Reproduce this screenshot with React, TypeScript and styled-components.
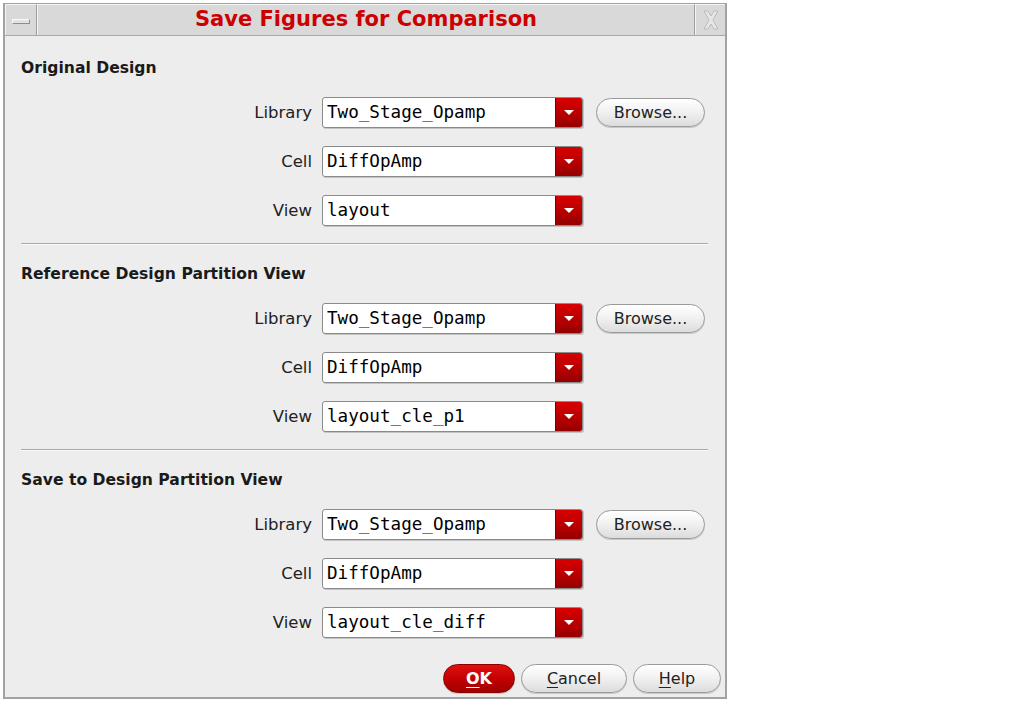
import React from "react";
import styled, { createGlobalStyle } from "styled-components";

const GlobalStyle = createGlobalStyle`
  body {
    margin: 0;
    background: #ffffff;
    font-family: "DejaVu Sans", sans-serif;
  }
`;

const sections = [
  { title: "Original Design", view: "layout" },
  { title: "Reference Design Partition View", view: "layout_cle_p1" },
  { title: "Save to Design Partition View", view: "layout_cle_diff" },
];

const Dialog: React.FC = () => {
  return (
    <Window>
      <TitleBar>
        <MinButton>
          <MinGlyph />
        </MinButton>
        <Title>Save Figures for Comparison</Title>
        <CloseButton>
          <svg width="18" height="22" viewBox="0 0 18 22">
            <path
              d="M2 2 L6 2 L9 7 L12 2 L16 2 L11 11 L16 20 L12 20 L9 15 L6 20 L2 20 L7 11 Z"
              fill="#e6e6e6"
              stroke="#bcbcbc"
              strokeWidth="1"
            />
          </svg>
        </CloseButton>
      </TitleBar>
      <Body>
        {sections.map((s, i) => (
          <React.Fragment key={s.title}>
            {i > 0 && <Separator />}
            <Section>
              <Heading>{s.title}</Heading>
              <Rows>
                <Row>
                  <Label>Library</Label>
                  <Combo value="Two_Stage_Opamp" />
                  <PillButton>Browse...</PillButton>
                </Row>
                <Row>
                  <Label>Cell</Label>
                  <Combo value="DiffOpAmp" />
                </Row>
                <Row>
                  <Label>View</Label>
                  <Combo value={s.view} />
                </Row>
              </Rows>
            </Section>
          </React.Fragment>
        ))}
        <Footer>
          <PillButton $primary $w={72}>
            <u>O</u>K
          </PillButton>
          <PillButton $w={106}>
            <u>C</u>ancel
          </PillButton>
          <PillButton $w={88}>
            <u>H</u>elp
          </PillButton>
        </Footer>
      </Body>
    </Window>
  );
};

const Combo: React.FC<{ value: string }> = ({ value }) => (
  <ComboBox>
    <ComboText>{value}</ComboText>
    <ComboArrow>
      <Triangle />
    </ComboArrow>
  </ComboBox>
);

const App: React.FC = () => (
  <>
    <GlobalStyle />
    <Dialog />
  </>
);

const Window = styled.div`
  margin: 3px 0 0 3px;
  width: 724px;
  height: 696px;
  box-sizing: border-box;
  border: 2px solid #a2a2a2;
  border-top-width: 1px;
  background: #ededed;
  display: flex;
  flex-direction: column;
`;

const TitleBar = styled.div`
  display: flex;
  height: 32px;
  box-sizing: border-box;
  background: #d9d9d9;
  border-bottom: 1px solid #a8a8a8;
`;

const MinButton = styled.div`
  width: 32px;
  box-sizing: border-box;
  border-right: 1px solid #9e9e9e;
  border-top: 1px solid #f4f4f4;
  border-left: 1px solid #f4f4f4;
  display: flex;
  align-items: center;
  justify-content: center;
`;

const MinGlyph = styled.div`
  width: 18px;
  height: 5px;
  box-sizing: border-box;
  border: 1px solid #8e8e8e;
  border-top-color: #fafafa;
  border-left-color: #fafafa;
  background: #e2e2e2;
  margin-top: 2px;
`;

const Title = styled.div`
  flex: 1;
  text-align: center;
  font-weight: bold;
  font-size: 21px;
  line-height: 29px;
  color: #cc0000;
  border-top: 1px solid #f4f4f4;
  border-left: 1px solid #f4f4f4;
  border-right: 1px solid #9e9e9e;
`;

const CloseButton = styled.div`
  width: 30px;
  box-sizing: border-box;
  border-top: 1px solid #f4f4f4;
  border-left: 1px solid #f4f4f4;
  display: flex;
  align-items: center;
  justify-content: center;
`;

const Body = styled.div`
  flex: 1;
  display: flex;
  flex-direction: column;
  padding-top: 22px;
`;

const Section = styled.section`
  padding: 0 17px 0 16px;
`;

const Heading = styled.h2`
  margin: 0;
  font-size: 15.6px;
  font-weight: bold;
  line-height: 20px;
  color: #1a1a1a;
`;

const Rows = styled.div`
  display: flex;
  flex-direction: column;
  gap: 18px;
  margin-top: 19px;
`;

const Row = styled.div`
  display: flex;
  align-items: center;
  height: 31px;
`;

const Label = styled.label`
  width: 291px;
  margin-right: 10px;
  text-align: right;
  font-size: 16.5px;
  color: #222;
`;

const ComboBox = styled.div`
  display: flex;
  width: 261px;
  height: 31px;
  box-sizing: border-box;
  border: 1px solid #8a8a8a;
  border-radius: 3px;
  background: #ffffff;
  overflow: hidden;
  box-shadow: 1px 1px 0 #c4c4c4;
  margin-right: 13px;
`;

const ComboText = styled.div`
  flex: 1;
  padding-left: 4px;
  font-family: "DejaVu Sans Mono", monospace;
  font-size: 17.6px;
  line-height: 29px;
  color: #000;
`;

const ComboArrow = styled.div`
  width: 26px;
  border-left: 1px solid #7a0000;
  background: linear-gradient(#d80000, #b40000 60%, #940000);
  display: flex;
  align-items: center;
  justify-content: center;
`;

const Triangle = styled.div`
  width: 0;
  height: 0;
  border-left: 5px solid transparent;
  border-right: 5px solid transparent;
  border-top: 5px solid #ffffff;
`;

const PillButton = styled.button<{ $primary?: boolean; $w?: number }>`
  width: ${(p) => p.$w ?? 109}px;
  height: 29px;
  padding: 0;
  box-sizing: border-box;
  border-radius: 15px;
  font-family: "DejaVu Sans", sans-serif;
  font-size: 16px;
  font-weight: ${(p) => (p.$primary ? "bold" : "normal")};
  color: ${(p) => (p.$primary ? "#ffffff" : "#222222")};
  border: 1px solid ${(p) => (p.$primary ? "#8a0000" : "#9a9a9a")};
  background: ${(p) =>
    p.$primary
      ? "linear-gradient(#e01010, #c00000 55%, #a00000)"
      : "linear-gradient(#ffffff, #f2f2f2 45%, #dcdcdc)"};
  box-shadow: 0 1px 0 #c8c8c8;
  u {
    text-underline-offset: 3px;
  }
`;

const Separator = styled.hr`
  margin: 17px 17px 19px 16px;
  border: 0;
  border-top: 1px solid #a8a8a8;
  border-bottom: 1px solid #fafafa;
`;

const Footer = styled.div`
  margin-top: auto;
  display: flex;
  justify-content: flex-end;
  gap: 6px;
  padding: 0 4px 4px 0;
`;

export default App;
